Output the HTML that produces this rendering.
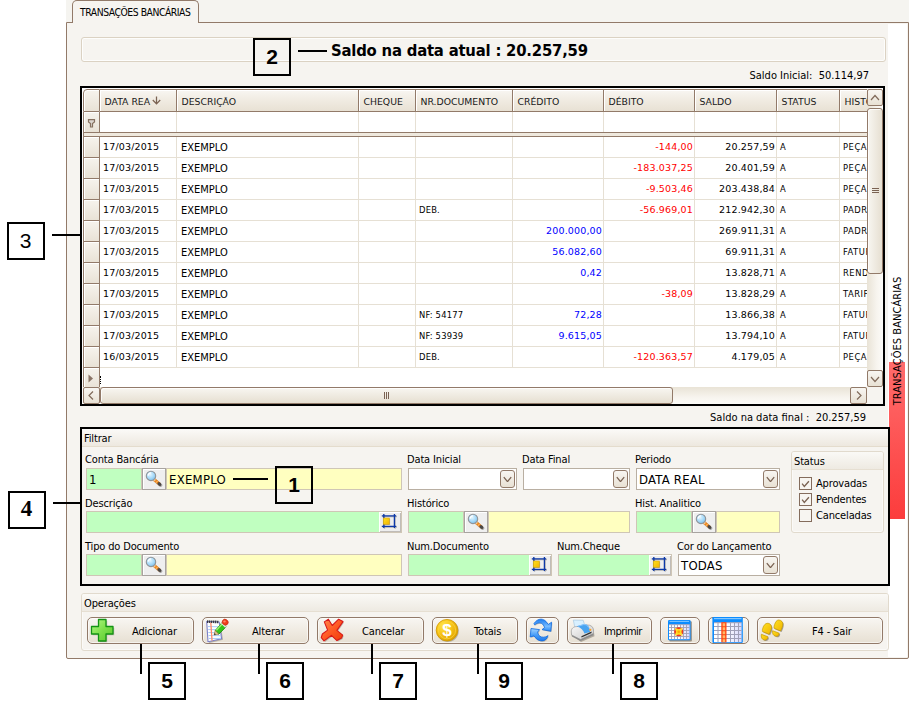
<!DOCTYPE html>
<html lang="pt-BR"><head><meta charset="utf-8"><title>Transações Bancárias</title>
<style>
html,body{margin:0;padding:0}
body{width:909px;height:704px;position:relative;overflow:hidden;background:#fff;
 font-family:"DejaVu Sans Condensed","Liberation Sans",sans-serif;font-size:11px;color:#000;line-height:13px}
div,span{position:absolute;box-sizing:border-box;white-space:nowrap}
.arial{font-family:"Liberation Sans",sans-serif}
.panel{left:66px;top:22px;width:843px;height:637px;background:#f6f4f0;border:1px solid #927a69;border-radius:0 0 2px 2px}
.topstrip{left:66px;top:0;width:843px;height:22px;background:#f5f4f0}
.tab{left:72px;top:0;width:127px;height:23px;background:#f6f4f0;border:1px solid #927a69;border-bottom:none;border-radius:5px 5px 0 0}
.tab span{left:7px;top:5px;font-size:10.3px;letter-spacing:-0.45px}
.wstrip{left:888px;top:24px;width:19px;height:633px;background:#fff}
.rstrip{left:889px;top:362px;width:16px;height:157px;background:linear-gradient(#ff6c6c,#fc3c3c)}
.vtext{left:897px;top:341px;width:0;height:0}
.vtext span{transform:translate(-50%,-50%) rotate(-90deg);left:0;top:0;font-size:11px;letter-spacing:0.05px}
.topbar{left:81px;top:37px;width:805px;height:25px;border:1px solid #dbd2c3;border-radius:3px;background:#f6f4f0;box-shadow:inset 0 0 0 1px #fdfdfc}
.title{left:331px;top:41px;font-weight:bold;font-size:16.5px;line-height:20px;letter-spacing:-0.2px}
.callout{border:2px solid #000;width:38px;height:38px;text-align:center;font-family:"Liberation Sans",sans-serif;font-weight:bold;font-size:21px;line-height:34px}
.ln{background:#000}
.lbl{font-size:11px;line-height:13px;letter-spacing:-0.15px}
.grid{left:80px;top:86px;width:805px;height:320px;border:2px solid #000;background:#fff;overflow:hidden}
.hdr{top:1px;height:23px;border-top:1px solid #927a69;border-bottom:1px solid #927a69;border-right:1px solid #927a69;background:linear-gradient(#f8f6f2,#f1ece3 45%,#e8e1d4);box-shadow:inset 1px 1px 0 #fff}
.hdr span{left:4.5px;top:5px;font-family:"DejaVu Sans","Liberation Sans",sans-serif;font-size:9.3px;color:#1a1a1a;letter-spacing:0}
.ind{left:1px;width:17px;border-left:1px solid #927a69;border-right:1px solid #927a69;border-bottom:1px solid #927a69;background:linear-gradient(#f6f3ed,#e9e2d6);box-shadow:inset 1px 1px 0 #fff}
.vl{width:1px;background:#e6e0d4}
.hl{height:1px;background:#e6e0d4;left:18px;width:768px}
.cell{height:20px;line-height:22px;font-size:11px;overflow:hidden}
.r{text-align:right}
.tx{font-size:9.3px;line-height:20px;letter-spacing:.2px}
.n{font-family:"DejaVu Sans","Liberation Sans",sans-serif;font-size:9.5px;line-height:20px;letter-spacing:.15px}
.red{color:#f00}.blue{color:#00f}
.inp{height:22px;border:1px solid #cfc6b6;line-height:22px;font-size:13px;letter-spacing:.25px;padding-left:2px}
.g{background:#c0ffc0}.y{background:#ffffc0}.w{background:#fff}
.sbtn{width:24px;height:22px;border:1px solid #a8a4a0;background:#efefef;box-shadow:inset 1px 1px 0 #fff}
.dd{width:15px;height:18px;border:1px solid #927a69;border-radius:3px;background:linear-gradient(#f8f6f2,#e8e1d4)}
.grp{border:1px solid #e1dacd;border-radius:3px;background:#f6f4f0;box-shadow:inset 0 0 0 1px #fbfaf8}
.grph{left:0;top:0;right:0;height:17px;background:linear-gradient(#faf9f6,#eeeae2);border-bottom:1px solid #e6dfd2;border-radius:2px 2px 0 0}
.btn{top:617px;height:27px;border:1px solid #927a69;border-radius:5px;background:linear-gradient(#f8f6f2,#f0ebe2 50%,#e7e0d3);box-shadow:inset 0 0 0 1px rgba(255,255,255,.6)}
.btn span.t{top:7px;font-size:11px;letter-spacing:-0.15px}
.chk{width:13px;height:13px;border:1px solid #846c5c;background:#f7f5f1}
</style></head>
<body>
<div class="topstrip"></div>
<div class="panel"></div>
<div class="tab"><span>TRANSAÇÕES BANCÁRIAS</span></div>
<div class="wstrip"></div><div class="rstrip"></div>
<div class="vtext"><span>TRANSAÇÕES BANCÁRIAS</span></div>
<div class="topbar"></div>
<div class="title">Saldo na data atual : 20.257,59</div>
<div class="lbl" style="right:40px;top:69px;letter-spacing:0">Saldo Inicial:&nbsp; 50.114,97</div>
<div class="grid"><div class="ind" style="top:1px;height:23px;border-top:1px solid #927a69;border-radius:4px 0 0 0"></div><div class="hdr" style="left:18px;width:77px"><span>DATA REA</span><svg style="position:absolute;left:52px;top:6px" width="9" height="9" viewBox="0 0 9 9"><path d="M4.500 0.400V7.800M0.800 4L4.500 7.900L8.200 4" fill="none" stroke="#7a6252" stroke-width="1.250"/></svg></div><div class="hdr" style="left:95px;width:182px"><span>DESCRIÇÃO</span></div><div class="hdr" style="left:277px;width:57px"><span>CHEQUE</span></div><div class="hdr" style="left:334px;width:97px"><span>NR.DOCUMENTO</span></div><div class="hdr" style="left:431px;width:91px"><span>CRÉDITO</span></div><div class="hdr" style="left:522px;width:91px"><span>DÉBITO</span></div><div class="hdr" style="left:613px;width:82px"><span>SALDO</span></div><div class="hdr" style="left:695px;width:63px"><span>STATUS</span></div><div class="hdr" style="left:758px;width:61px"><span>HISTÓRICO</span></div><div class="ind" style="top:24px;height:21px"><svg style="position:absolute;left:3px;top:7px" width="9" height="9" viewBox="0 0 9 9"><path d="M1.500 0.600H7.500V3L5.500 4.600V8H3.500V4.600L1.500 3Z" fill="#dcd6d0" stroke="#86705f" stroke-width="1.200"/></svg></div><div style="left:1px;top:44px;width:785px;height:5px;background:#efe9de;border-top:1px solid #927a69;border-bottom:1px solid #927a69;border-left:1px solid #927a69"></div><div class="vl" style="left:94px;top:24px;height:20px"></div><div class="vl" style="left:94px;top:49px;height:231px"></div><div class="vl" style="left:276px;top:24px;height:20px"></div><div class="vl" style="left:276px;top:49px;height:231px"></div><div class="vl" style="left:333px;top:24px;height:20px"></div><div class="vl" style="left:333px;top:49px;height:231px"></div><div class="vl" style="left:430px;top:24px;height:20px"></div><div class="vl" style="left:430px;top:49px;height:231px"></div><div class="vl" style="left:521px;top:24px;height:20px"></div><div class="vl" style="left:521px;top:49px;height:231px"></div><div class="vl" style="left:612px;top:24px;height:20px"></div><div class="vl" style="left:612px;top:49px;height:231px"></div><div class="vl" style="left:694px;top:24px;height:20px"></div><div class="vl" style="left:694px;top:49px;height:231px"></div><div class="vl" style="left:757px;top:24px;height:20px"></div><div class="vl" style="left:757px;top:49px;height:231px"></div><div class="ind" style="top:49px;height:21px"></div><div class="hl" style="top:69px"></div><div class="cell n" style="left:18px;top:49px;width:76px;padding-left:3px;">17/03/2015</div><div class="cell" style="left:95px;top:49px;width:181px;padding-left:4px;">EXEMPLO</div><div class="cell r n red" style="left:522px;top:49px;width:90px;padding-right:1px;">-144,00</div><div class="cell r n" style="left:613px;top:49px;width:81px;padding-right:1px;">20.257,59</div><div class="cell tx" style="left:695px;top:49px;width:62px;padding-left:3px;">A</div><div class="cell tx" style="left:758px;top:49px;width:60px;padding-left:3px;letter-spacing:.55px;">PEÇAS</div><div class="ind" style="top:70px;height:21px"></div><div class="hl" style="top:90px"></div><div class="cell n" style="left:18px;top:70px;width:76px;padding-left:3px;">17/03/2015</div><div class="cell" style="left:95px;top:70px;width:181px;padding-left:4px;">EXEMPLO</div><div class="cell r n red" style="left:522px;top:70px;width:90px;padding-right:1px;">-183.037,25</div><div class="cell r n" style="left:613px;top:70px;width:81px;padding-right:1px;">20.401,59</div><div class="cell tx" style="left:695px;top:70px;width:62px;padding-left:3px;">A</div><div class="cell tx" style="left:758px;top:70px;width:60px;padding-left:3px;letter-spacing:.55px;">PEÇAS</div><div class="ind" style="top:91px;height:21px"></div><div class="hl" style="top:111px"></div><div class="cell n" style="left:18px;top:91px;width:76px;padding-left:3px;">17/03/2015</div><div class="cell" style="left:95px;top:91px;width:181px;padding-left:4px;">EXEMPLO</div><div class="cell r n red" style="left:522px;top:91px;width:90px;padding-right:1px;">-9.503,46</div><div class="cell r n" style="left:613px;top:91px;width:81px;padding-right:1px;">203.438,84</div><div class="cell tx" style="left:695px;top:91px;width:62px;padding-left:3px;">A</div><div class="cell tx" style="left:758px;top:91px;width:60px;padding-left:3px;letter-spacing:.55px;">PEÇAS</div><div class="ind" style="top:112px;height:21px"></div><div class="hl" style="top:132px"></div><div class="cell n" style="left:18px;top:112px;width:76px;padding-left:3px;">17/03/2015</div><div class="cell" style="left:95px;top:112px;width:181px;padding-left:4px;">EXEMPLO</div><div class="cell tx" style="left:334px;top:112px;width:96px;padding-left:3px;">DEB.</div><div class="cell r n red" style="left:522px;top:112px;width:90px;padding-right:1px;">-56.969,01</div><div class="cell r n" style="left:613px;top:112px;width:81px;padding-right:1px;">212.942,30</div><div class="cell tx" style="left:695px;top:112px;width:62px;padding-left:3px;">A</div><div class="cell tx" style="left:758px;top:112px;width:60px;padding-left:3px;letter-spacing:.55px;">PADRÃO</div><div class="ind" style="top:133px;height:21px"></div><div class="hl" style="top:153px"></div><div class="cell n" style="left:18px;top:133px;width:76px;padding-left:3px;">17/03/2015</div><div class="cell" style="left:95px;top:133px;width:181px;padding-left:4px;">EXEMPLO</div><div class="cell r n blue" style="left:431px;top:133px;width:90px;padding-right:1px;">200.000,00</div><div class="cell r n" style="left:613px;top:133px;width:81px;padding-right:1px;">269.911,31</div><div class="cell tx" style="left:695px;top:133px;width:62px;padding-left:3px;">A</div><div class="cell tx" style="left:758px;top:133px;width:60px;padding-left:3px;letter-spacing:.55px;">PADRÃO</div><div class="ind" style="top:154px;height:21px"></div><div class="hl" style="top:174px"></div><div class="cell n" style="left:18px;top:154px;width:76px;padding-left:3px;">17/03/2015</div><div class="cell" style="left:95px;top:154px;width:181px;padding-left:4px;">EXEMPLO</div><div class="cell r n blue" style="left:431px;top:154px;width:90px;padding-right:1px;">56.082,60</div><div class="cell r n" style="left:613px;top:154px;width:81px;padding-right:1px;">69.911,31</div><div class="cell tx" style="left:695px;top:154px;width:62px;padding-left:3px;">A</div><div class="cell tx" style="left:758px;top:154px;width:60px;padding-left:3px;letter-spacing:.55px;">FATURA</div><div class="ind" style="top:175px;height:21px"></div><div class="hl" style="top:195px"></div><div class="cell n" style="left:18px;top:175px;width:76px;padding-left:3px;">17/03/2015</div><div class="cell" style="left:95px;top:175px;width:181px;padding-left:4px;">EXEMPLO</div><div class="cell r n blue" style="left:431px;top:175px;width:90px;padding-right:1px;">0,42</div><div class="cell r n" style="left:613px;top:175px;width:81px;padding-right:1px;">13.828,71</div><div class="cell tx" style="left:695px;top:175px;width:62px;padding-left:3px;">A</div><div class="cell tx" style="left:758px;top:175px;width:60px;padding-left:3px;letter-spacing:.55px;">RENDIMENTO</div><div class="ind" style="top:196px;height:21px"></div><div class="hl" style="top:216px"></div><div class="cell n" style="left:18px;top:196px;width:76px;padding-left:3px;">17/03/2015</div><div class="cell" style="left:95px;top:196px;width:181px;padding-left:4px;">EXEMPLO</div><div class="cell r n red" style="left:522px;top:196px;width:90px;padding-right:1px;">-38,09</div><div class="cell r n" style="left:613px;top:196px;width:81px;padding-right:1px;">13.828,29</div><div class="cell tx" style="left:695px;top:196px;width:62px;padding-left:3px;">A</div><div class="cell tx" style="left:758px;top:196px;width:60px;padding-left:3px;letter-spacing:.55px;">TARIFA</div><div class="ind" style="top:217px;height:21px"></div><div class="hl" style="top:237px"></div><div class="cell n" style="left:18px;top:217px;width:76px;padding-left:3px;">17/03/2015</div><div class="cell" style="left:95px;top:217px;width:181px;padding-left:4px;">EXEMPLO</div><div class="cell tx" style="left:334px;top:217px;width:96px;padding-left:3px;">NF: 54177</div><div class="cell r n blue" style="left:431px;top:217px;width:90px;padding-right:1px;">72,28</div><div class="cell r n" style="left:613px;top:217px;width:81px;padding-right:1px;">13.866,38</div><div class="cell tx" style="left:695px;top:217px;width:62px;padding-left:3px;">A</div><div class="cell tx" style="left:758px;top:217px;width:60px;padding-left:3px;letter-spacing:.55px;">FATURA</div><div class="ind" style="top:238px;height:21px"></div><div class="hl" style="top:258px"></div><div class="cell n" style="left:18px;top:238px;width:76px;padding-left:3px;">17/03/2015</div><div class="cell" style="left:95px;top:238px;width:181px;padding-left:4px;">EXEMPLO</div><div class="cell tx" style="left:334px;top:238px;width:96px;padding-left:3px;">NF: 53939</div><div class="cell r n blue" style="left:431px;top:238px;width:90px;padding-right:1px;">9.615,05</div><div class="cell r n" style="left:613px;top:238px;width:81px;padding-right:1px;">13.794,10</div><div class="cell tx" style="left:695px;top:238px;width:62px;padding-left:3px;">A</div><div class="cell tx" style="left:758px;top:238px;width:60px;padding-left:3px;letter-spacing:.55px;">FATURA</div><div class="ind" style="top:259px;height:21px"></div><div class="hl" style="top:279px"></div><div class="cell n" style="left:18px;top:259px;width:76px;padding-left:3px;">16/03/2015</div><div class="cell" style="left:95px;top:259px;width:181px;padding-left:4px;">EXEMPLO</div><div class="cell tx" style="left:334px;top:259px;width:96px;padding-left:3px;">DEB.</div><div class="cell r n red" style="left:522px;top:259px;width:90px;padding-right:1px;">-120.363,57</div><div class="cell r n" style="left:613px;top:259px;width:81px;padding-right:1px;">4.179,05</div><div class="cell tx" style="left:695px;top:259px;width:62px;padding-left:3px;">A</div><div class="cell tx" style="left:758px;top:259px;width:60px;padding-left:3px;letter-spacing:.55px;">PEÇAS</div><div class="ind" style="top:280px;height:20px;border-bottom:none"><svg style="position:absolute;left:4px;top:6px" width="6" height="9" viewBox="0 0 6 9"><path d="M0.5 0.5L5 4.5L0.5 8.5Z" fill="#8a7466"/></svg></div><div style="left:18px;top:288px;width:1px;height:8px;border-left:1px dotted #000"></div><div style="left:1px;top:299px;width:785px;height:17px;background:linear-gradient(#e9e3d6,#f7f4ee 60%,#fcfbf8)"></div><div style="left:1px;top:299px;width:17px;height:17px;border:1px solid #927a69;border-radius:2px;background:linear-gradient(#f8f6f2,#e8e1d4)"><svg style="position:absolute;left:3px;top:3px" width="8" height="9" viewBox="0 0 8 9"><path d="M6 0.5L2 4.5L6 8.5" fill="none" stroke="#806a5a" stroke-width="1.2"/></svg></div><div style="left:18px;top:299px;width:573px;height:17px;border:1px solid #927a69;border-radius:3px;background:linear-gradient(#f8f6f1,#e6dfd1);box-shadow:inset 1px 1px 0 rgba(255,255,255,.8)"><svg style="position:absolute;left:283px;top:4px" width="6" height="7" viewBox="0 0 6 7"><path d="M.5 0V7M2.500 0V7M4.500 0V7" stroke="#7a6252" stroke-width="1"/></svg></div><div style="left:768px;top:299px;width:17px;height:17px;border:1px solid #927a69;border-radius:2px;background:linear-gradient(#f8f6f2,#e8e1d4)"><svg style="position:absolute;left:4px;top:3px" width="8" height="9" viewBox="0 0 8 9"><path d="M2 0.5L6 4.5L2 8.5" fill="none" stroke="#806a5a" stroke-width="1.2"/></svg></div><div style="left:785px;top:1px;width:16px;height:315px;background:#f6f4f0"></div><div style="left:785px;top:1px;width:16px;height:298px;background:linear-gradient(90deg,#e9e3d6,#f7f4ee 60%,#fcfbf8)"></div><div style="left:785px;top:1px;width:16px;height:17px;border:1px solid #927a69;border-radius:2px;background:linear-gradient(#f8f6f2,#e8e1d4)"><svg style="position:absolute;left:2px;top:4px" width="10" height="7" viewBox="0 0 10 7"><path d="M1 6L5 1.5L9 6" fill="none" stroke="#806a5a" stroke-width="1.2"/></svg></div><div style="left:785px;top:20px;width:16px;height:166px;border:1px solid #927a69;border-radius:3px;background:linear-gradient(90deg,#f8f6f1,#e6dfd1);box-shadow:inset 1px 1px 0 rgba(255,255,255,.8)"><svg style="position:absolute;left:4px;top:79px" width="7" height="6" viewBox="0 0 7 6"><path d="M0 .5H7M0 2.500H7M0 4.500H7" stroke="#7a6252" stroke-width="1"/></svg></div><div style="left:785px;top:282px;width:16px;height:17px;border:1px solid #927a69;border-radius:2px;background:linear-gradient(#f8f6f2,#e8e1d4)"><svg style="position:absolute;left:2px;top:5px" width="10" height="7" viewBox="0 0 10 7"><path d="M1 1L5 5.5L9 1" fill="none" stroke="#806a5a" stroke-width="1.2"/></svg></div></div>
<div class="lbl" style="right:43px;top:411px;letter-spacing:0">Saldo na data final :&nbsp; 20.257,59</div>
<div style="left:80px;top:427px;width:810px;height:159px;border:2px solid #000;background:#f6f4f0"></div>
<div style="left:82px;top:429px;width:806px;height:18px;background:linear-gradient(#fbfaf8,#ede8df);border-bottom:1px solid #e4dccd"></div>
<div class="lbl" style="left:84px;top:432px">Filtrar</div>
<div class="lbl" style="left:85px;top:453px">Conta Bancária</div>
<div class="inp g" style="left:86px;top:468px;width:56px">1</div>
<div class="sbtn" style="left:142px;top:468px"><svg style="position:absolute;left:0px;top:0px" width="22" height="20" viewBox="0 0 22 20"><path d="M11.300 10.700L17 15.600" stroke="#505050" stroke-width="3.400" stroke-linecap="round" opacity=".45" transform="translate(.6,.6)"/><path d="M11 10.400L16.600 15.200" stroke="#f08418" stroke-width="3" stroke-linecap="round"/><path d="M12.600 10.600L11.200 12.300M14.400 12.100L13 13.800" stroke="#ffd898" stroke-width=".9"/><path d="M16 14.700L16.800 15.400" stroke="#484848" stroke-width="3" stroke-linecap="round"/><path d="M10.500 9.800L11.800 10.900" stroke="#f0f0f0" stroke-width="2.200"/><circle cx="8" cy="6.900" r="4.700" fill="url(#gL)" stroke="#909498" stroke-width="1.100"/><path d="M5.200 6.200A3 3 0 0 1 7.600 3.800" stroke="#fff" stroke-width="1.300" fill="none" stroke-linecap="round"/></svg></div>
<div class="inp y" style="left:166px;top:468px;width:236px">EXEMPLO</div>
<div class="lbl" style="left:407px;top:453px">Data Inicial</div>
<div class="inp w" style="left:408px;top:468px;width:109px;border-color:#b9afa2"><div class="dd" style="right:1px;top:1px"><svg style="position:absolute;left:2px;top:5px" width="9" height="6" viewBox="0 0 9 6"><path d="M0.8 1.200L4.500 5.600L8.200 1.200" fill="none" stroke="#7a6252" stroke-width="1.300"/></svg></div></div>
<div class="lbl" style="left:522px;top:453px">Data Final</div>
<div class="inp w" style="left:523px;top:468px;width:107px;border-color:#b9afa2"><div class="dd" style="right:1px;top:1px"><svg style="position:absolute;left:2px;top:5px" width="9" height="6" viewBox="0 0 9 6"><path d="M0.8 1.200L4.500 5.600L8.200 1.200" fill="none" stroke="#7a6252" stroke-width="1.300"/></svg></div></div>
<div class="lbl" style="left:635px;top:453px">Periodo</div>
<div class="inp w" style="left:636px;top:468px;width:144px;border-color:#b9afa2">DATA REAL<div class="dd" style="right:1px;top:1px"><svg style="position:absolute;left:2px;top:5px" width="9" height="6" viewBox="0 0 9 6"><path d="M0.8 1.200L4.500 5.600L8.200 1.200" fill="none" stroke="#7a6252" stroke-width="1.300"/></svg></div></div>
<div class="lbl" style="left:85px;top:497px">Descrição</div>
<div class="inp g" style="left:86px;top:511px;width:316px"></div>
<div style="left:379px;top:512px;width:22px;height:20px;background:#eeeeee;box-shadow:inset 1px 1px 0 #fff,inset -1px -1px 0 #c0bcb8"><svg style="position:absolute;left:0px;top:0px" width="22" height="20" viewBox="0 0 22 20"><g transform="translate(.7,.7)" opacity=".35"><path d="M2.800 3.900H17.200M2.800 14.300H17.200M4.800 2V16M15.400 2V16" stroke="#404040" stroke-width="1.300" fill="none"/><rect x="4.200" y="6" width="6.200" height="6.300" fill="#404040"/></g><path d="M2.800 3.900H17.200M2.800 14.300H17.200M4.800 2V16M15.400 2V16" stroke="#0c38a8" stroke-width="1.300" fill="none"/><rect x="4.200" y="6" width="6.200" height="6.300" fill="url(#gY)" stroke="#d8a000" stroke-width=".5"/></svg></div>
<div class="lbl" style="left:407px;top:497px">Histórico</div>
<div class="inp g" style="left:408px;top:511px;width:56px"></div>
<div class="sbtn" style="left:464px;top:511px"><svg style="position:absolute;left:0px;top:0px" width="22" height="20" viewBox="0 0 22 20"><path d="M11.300 10.700L17 15.600" stroke="#505050" stroke-width="3.400" stroke-linecap="round" opacity=".45" transform="translate(.6,.6)"/><path d="M11 10.400L16.600 15.200" stroke="#f08418" stroke-width="3" stroke-linecap="round"/><path d="M12.600 10.600L11.200 12.300M14.400 12.100L13 13.800" stroke="#ffd898" stroke-width=".9"/><path d="M16 14.700L16.800 15.400" stroke="#484848" stroke-width="3" stroke-linecap="round"/><path d="M10.500 9.800L11.800 10.900" stroke="#f0f0f0" stroke-width="2.200"/><circle cx="8" cy="6.900" r="4.700" fill="url(#gL)" stroke="#909498" stroke-width="1.100"/><path d="M5.200 6.200A3 3 0 0 1 7.600 3.800" stroke="#fff" stroke-width="1.300" fill="none" stroke-linecap="round"/></svg></div>
<div class="inp y" style="left:488px;top:511px;width:142px"></div>
<div class="lbl" style="left:635px;top:497px">Hist. Analitico</div>
<div class="inp g" style="left:636px;top:511px;width:56px"></div>
<div class="sbtn" style="left:692px;top:511px"><svg style="position:absolute;left:0px;top:0px" width="22" height="20" viewBox="0 0 22 20"><path d="M11.300 10.700L17 15.600" stroke="#505050" stroke-width="3.400" stroke-linecap="round" opacity=".45" transform="translate(.6,.6)"/><path d="M11 10.400L16.600 15.200" stroke="#f08418" stroke-width="3" stroke-linecap="round"/><path d="M12.600 10.600L11.200 12.300M14.400 12.100L13 13.800" stroke="#ffd898" stroke-width=".9"/><path d="M16 14.700L16.800 15.400" stroke="#484848" stroke-width="3" stroke-linecap="round"/><path d="M10.500 9.800L11.800 10.900" stroke="#f0f0f0" stroke-width="2.200"/><circle cx="8" cy="6.900" r="4.700" fill="url(#gL)" stroke="#909498" stroke-width="1.100"/><path d="M5.200 6.200A3 3 0 0 1 7.600 3.800" stroke="#fff" stroke-width="1.300" fill="none" stroke-linecap="round"/></svg></div>
<div class="inp y" style="left:716px;top:511px;width:64px"></div>
<div class="lbl" style="left:85px;top:540px">Tipo do Documento</div>
<div class="inp g" style="left:86px;top:554px;width:56px"></div>
<div class="sbtn" style="left:142px;top:554px"><svg style="position:absolute;left:0px;top:0px" width="22" height="20" viewBox="0 0 22 20"><path d="M11.300 10.700L17 15.600" stroke="#505050" stroke-width="3.400" stroke-linecap="round" opacity=".45" transform="translate(.6,.6)"/><path d="M11 10.400L16.600 15.200" stroke="#f08418" stroke-width="3" stroke-linecap="round"/><path d="M12.600 10.600L11.200 12.300M14.400 12.100L13 13.800" stroke="#ffd898" stroke-width=".9"/><path d="M16 14.700L16.800 15.400" stroke="#484848" stroke-width="3" stroke-linecap="round"/><path d="M10.500 9.800L11.800 10.900" stroke="#f0f0f0" stroke-width="2.200"/><circle cx="8" cy="6.900" r="4.700" fill="url(#gL)" stroke="#909498" stroke-width="1.100"/><path d="M5.200 6.200A3 3 0 0 1 7.600 3.800" stroke="#fff" stroke-width="1.300" fill="none" stroke-linecap="round"/></svg></div>
<div class="inp y" style="left:166px;top:554px;width:236px"></div>
<div class="lbl" style="left:407px;top:540px">Num.Documento</div>
<div class="inp g" style="left:408px;top:554px;width:144px"></div>
<div style="left:529px;top:555px;width:22px;height:20px;background:#eeeeee;box-shadow:inset 1px 1px 0 #fff,inset -1px -1px 0 #c0bcb8"><svg style="position:absolute;left:0px;top:0px" width="22" height="20" viewBox="0 0 22 20"><g transform="translate(.7,.7)" opacity=".35"><path d="M2.800 3.900H17.200M2.800 14.300H17.200M4.800 2V16M15.400 2V16" stroke="#404040" stroke-width="1.300" fill="none"/><rect x="4.200" y="6" width="6.200" height="6.300" fill="#404040"/></g><path d="M2.800 3.900H17.200M2.800 14.300H17.200M4.800 2V16M15.400 2V16" stroke="#0c38a8" stroke-width="1.300" fill="none"/><rect x="4.200" y="6" width="6.200" height="6.300" fill="url(#gY)" stroke="#d8a000" stroke-width=".5"/></svg></div>
<div class="lbl" style="left:557px;top:540px">Num.Cheque</div>
<div class="inp g" style="left:558px;top:554px;width:114px"></div>
<div style="left:649px;top:555px;width:22px;height:20px;background:#eeeeee;box-shadow:inset 1px 1px 0 #fff,inset -1px -1px 0 #c0bcb8"><svg style="position:absolute;left:0px;top:0px" width="22" height="20" viewBox="0 0 22 20"><g transform="translate(.7,.7)" opacity=".35"><path d="M2.800 3.900H17.200M2.800 14.300H17.200M4.800 2V16M15.400 2V16" stroke="#404040" stroke-width="1.300" fill="none"/><rect x="4.200" y="6" width="6.200" height="6.300" fill="#404040"/></g><path d="M2.800 3.900H17.200M2.800 14.300H17.200M4.800 2V16M15.400 2V16" stroke="#0c38a8" stroke-width="1.300" fill="none"/><rect x="4.200" y="6" width="6.200" height="6.300" fill="url(#gY)" stroke="#d8a000" stroke-width=".5"/></svg></div>
<div class="lbl" style="left:677px;top:540px">Cor do Lançamento</div>
<div class="inp w" style="left:678px;top:554px;width:102px;border-color:#b9afa2">TODAS<div class="dd" style="right:1px;top:1px"><svg style="position:absolute;left:2px;top:5px" width="9" height="6" viewBox="0 0 9 6"><path d="M0.8 1.200L4.500 5.600L8.200 1.200" fill="none" stroke="#7a6252" stroke-width="1.300"/></svg></div></div>
<div class="grp" style="left:791px;top:451px;width:93px;height:82px"><div class="grph" style="height:18px"></div><div class="lbl" style="left:2px;top:3px">Status</div></div>
<div class="chk" style="left:799px;top:477px"><svg style="position:absolute;left:1px;top:1px" width="9" height="9" viewBox="0 0 9 9"><path d="M1.100 4.700L3.300 7.500L7.900 2.200" fill="none" stroke="#7a6252" stroke-width="1.300"/></svg></div>
<div class="lbl" style="left:816px;top:477px">Aprovadas</div>
<div class="chk" style="left:799px;top:493px"><svg style="position:absolute;left:1px;top:1px" width="9" height="9" viewBox="0 0 9 9"><path d="M1.100 4.700L3.300 7.500L7.900 2.200" fill="none" stroke="#7a6252" stroke-width="1.300"/></svg></div>
<div class="lbl" style="left:816px;top:493px">Pendentes</div>
<div class="chk" style="left:799px;top:509px"></div>
<div class="lbl" style="left:816px;top:509px">Canceladas</div>
<div class="grp" style="left:81px;top:593px;width:808px;height:58px"><div class="grph" style="height:18px"></div><div class="lbl" style="left:2px;top:3px">Operações</div></div>
<svg width="0" height="0" style="position:absolute"><defs><linearGradient id="gG" x1="0" y1="0" x2="1" y2="1"><stop offset="0" stop-color="#b4f888"/><stop offset=".5" stop-color="#7ee04c"/><stop offset="1" stop-color="#58c42c"/></linearGradient><linearGradient id="gR" x1="0" y1="0" x2="1" y2="1"><stop offset="0" stop-color="#ff8a50"/><stop offset=".5" stop-color="#ff5a24"/><stop offset="1" stop-color="#ee3a0c"/></linearGradient><radialGradient id="gC" cx=".35" cy=".3" r=".8"><stop offset="0" stop-color="#ffe850"/><stop offset=".45" stop-color="#f8c418"/><stop offset="1" stop-color="#d89c00"/></radialGradient><linearGradient id="gB" x1="0" y1="0" x2="0" y2="1"><stop offset="0" stop-color="#1c7cf0"/><stop offset=".6" stop-color="#78bcff"/><stop offset="1" stop-color="#2a88f4"/></linearGradient><linearGradient id="gB2" x1="0" y1="0" x2="0" y2="1"><stop offset="0" stop-color="#a4d4ff"/><stop offset=".5" stop-color="#4ca0f8"/><stop offset="1" stop-color="#1c78ec"/></linearGradient><radialGradient id="gL" cx=".4" cy=".35" r=".7"><stop offset="0" stop-color="#e4f6ff"/><stop offset=".6" stop-color="#a4d8f8"/><stop offset="1" stop-color="#78bce8"/></radialGradient><linearGradient id="gY" x1="0" y1="0" x2="1" y2="1"><stop offset="0" stop-color="#ffe020"/><stop offset="1" stop-color="#f0b400"/></linearGradient><linearGradient id="gP" x1="0" y1="0" x2="1" y2="1"><stop offset="0" stop-color="#fafafa"/><stop offset="1" stop-color="#c8c8c8"/></linearGradient><linearGradient id="gGr" x1="0" y1="0" x2="1" y2="0"><stop offset="0" stop-color="#fff"/><stop offset=".45" stop-color="#fff"/><stop offset="1" stop-color="#d8d8fc"/></linearGradient><linearGradient id="gO" x1="0" y1="0" x2="1" y2="0"><stop offset="0" stop-color="#ff3c10"/><stop offset=".5" stop-color="#ffb060"/><stop offset="1" stop-color="#ff3c10"/></linearGradient></defs></svg>
<div class="btn" style="left:87px;width:107px"><svg style="position:absolute;left:2px;top:0px" width="26" height="26" viewBox="0 0 26 26"><path d="M8.500 1.500h7.500v7h7v7.500h-7v7h-7.500v-7h-7v-7.500h7z" transform="translate(1.200,1.200)" fill="#5a5040" opacity=".35"/><path d="M8.500 1.500h7.500v7h7v7.500h-7v7h-7.500v-7h-7v-7.500h7z" fill="url(#gG)" stroke="#149414" stroke-width="1.300" stroke-linejoin="round"/></svg><span class="t" style="left:44px">Adicionar</span></div>
<div class="btn" style="left:202px;width:107px"><svg style="position:absolute;left:1px;top:0px" width="28" height="26" viewBox="0 0 28 26"><path d="M3 4.500L15.500 4.500L18 21L4 24.500Z" transform="translate(1,.8)" fill="#5a5040" opacity=".35"/><path d="M2.700 3.500L15.200 4L17.600 20.800L4 23.800Z" fill="#fff" stroke="#7c80c8" stroke-width="1.100" stroke-linejoin="round"/><path d="M4 8.500L15.500 8.800M4.200 11.500L16 11.800M4.400 14.500L16.400 14.800M4.600 17.500L16.800 17.700M4.800 20.500L17 20.400" stroke="#a8ccf8" stroke-width="1"/><path d="M6.800 4.500L8 22.500" stroke="#ff8a6a" stroke-width="1.300"/><path d="M3.200 3.600L15 4" stroke="#202020" stroke-width="2.600" stroke-dasharray="1.100 .9"/><path d="M11.200 12.600L18 4.800L22 8.800L14.800 16.200Z" fill="#34c418" stroke="#1a8c0c" stroke-width=".9" stroke-linejoin="round"/><path d="M12.400 12.300L18.300 5.700" stroke="#98f070" stroke-width="1.500"/><path d="M10 17L11.200 12.600L14.800 16.200Z" fill="#e8c890" stroke="#8a6a3a" stroke-width=".6"/><path d="M10 17L10.600 14.900L12 16.400Z" fill="#303030"/><path d="M17.600 5.100L21.700 9.100" stroke="#e4e4e4" stroke-width="1.500"/><ellipse cx="21.200" cy="4.200" rx="3.100" ry="2.800" transform="rotate(40 21.200 4.200)" fill="#f03c1c" stroke="#c02408" stroke-width=".6"/><ellipse cx="20.500" cy="3.400" rx="1.300" ry="1" fill="#ff8868"/></svg><span class="t" style="left:49px">Alterar</span></div>
<div class="btn" style="left:317px;width:107px"><svg style="position:absolute;left:0px;top:0px" width="29" height="26" viewBox="0 0 29 26"><path id="xp" d="M6.300 3.900L10.400 1.200L14.250 7.500L20.600 1.200L25 3.600L18.900 12.400L24.700 17.100L23.600 19.900L18.900 22.600L13.400 17.400L6 22.900L3.250 19.600L4.350 16L9.600 12.150Z" transform="translate(1,1)" fill="#5a5040" opacity=".35"/><path d="M6.300 3.900L10.400 1.200L14.250 7.500L20.600 1.200L25 3.600L18.900 12.400L24.700 17.100L23.600 19.900L18.900 22.600L13.400 17.400L6 22.900L3.250 19.600L4.350 16L9.600 12.150Z" fill="url(#gR)" stroke="#d81818" stroke-width="1.100" stroke-linejoin="round"/></svg><span class="t" style="left:44px">Cancelar</span></div>
<div class="btn" style="left:432px;width:86px"><svg style="position:absolute;left:2px;top:0px" width="26" height="26" viewBox="0 0 26 26"><circle cx="12.800" cy="13" r="11" fill="#5a5040" opacity=".35"/><circle cx="12" cy="12.200" r="10.800" fill="url(#gC)" stroke="#d09800" stroke-width=".8"/><circle cx="12" cy="12.200" r="8.600" fill="none" stroke="#ffd83c" stroke-width="1" opacity=".7"/><text x="12" y="18.400" font-family="Liberation Sans,sans-serif" font-weight="bold" font-size="17" fill="#fff" text-anchor="middle">$</text></svg><span class="t" style="left:41px">Totais</span></div>
<div class="btn" style="left:526px;width:33px"><svg style="position:absolute;left:0px;top:0px" width="30" height="26" viewBox="0 0 30 26"><g transform="translate(.8,.8)" fill="#5a5040" opacity=".3"><path d="M7 5.550C9 2.500 11.500 1.150 13.900 1.150C16 1.150 17.800 2.200 18.850 3.350L21.300 6.400L24.600 4.200L23.800 13.250L15 11.600L17.500 9.700C17 7.500 16 6.200 14.500 5.300C12.500 4.300 9.500 5 7.600 6.900Z"/><path d="M4 10.500L12.500 11.600L10.600 14.100C11 16 11.800 17.400 12.800 18.200C14.500 19.600 18.500 19.700 21.050 17.650C20 21 17.500 22.900 15 22.900C12.500 22.900 10.500 21.800 9.500 20.950L7 17.900L3.200 19Z"/></g><path d="M7 5.550C9 2.500 11.500 1.150 13.900 1.150C16 1.150 17.800 2.200 18.850 3.350L21.300 6.400L24.600 4.200L23.800 13.250L15 11.600L17.500 9.700C17 7.500 16 6.200 14.500 5.300C12.500 4.300 9.500 5 7.600 6.900Z" fill="url(#gB)" stroke="#0c68e0" stroke-width=".8" stroke-linejoin="round"/><path d="M4 10.500L12.500 11.600L10.600 14.100C11 16 11.800 17.400 12.800 18.200C14.500 19.600 18.500 19.700 21.050 17.650C20 21 17.500 22.900 15 22.900C12.500 22.900 10.500 21.800 9.500 20.950L7 17.900L3.200 19Z" fill="url(#gB2)" stroke="#0c68e0" stroke-width=".8" stroke-linejoin="round"/></svg></div>
<div class="btn" style="left:567px;width:85px"><svg style="position:absolute;left:0px;top:0px" width="30" height="26" viewBox="0 0 30 26"><path d="M5 17.500L12.500 23.300L26 17.500L25.500 14L5 14Z" transform="translate(.5,.8)" fill="#5a5040" opacity=".4"/><path d="M5.300 2.100L15.200 2.250L16.800 7.500L6.900 9.500Z" fill="#d8f0ff" stroke="#a8c8e0" stroke-width=".7"/><path d="M3.300 14C3 10.500 5.500 8.700 8.500 8.600L19 7C23 6.800 25.300 9 25.500 12L25.500 15.500L12.500 21.500L3.600 17Z" fill="url(#gP)" stroke="#a0a0a0" stroke-width=".8" stroke-linejoin="round"/><path d="M8.800 8.400L15.500 6.300C19 5.800 21 8 21.600 11L22 14L16.500 15.500C15.500 12 13 9.500 8.800 8.400Z" fill="#48a4f0"/><path d="M10 8.200L15.500 6.600C18 6.300 19.800 7.500 20.600 9.500" stroke="#8cc8ff" stroke-width="1" fill="none"/><path d="M3.600 17L12.500 21.500L25.500 15.500L25.400 17.300L12.400 23L3.900 18.500Z" fill="#8c8c8c"/><path d="M13.300 18.200L23.500 13.600L23.600 15L13.600 19.600Z" fill="#303030"/><circle cx="22.300" cy="11.800" r="1.100" fill="#ffa020"/></svg><span class="t" style="left:36px"><i style="font-style:normal;letter-spacing:-0.55px">Imprimir</i></span></div>
<div class="btn" style="left:660px;width:40px"><svg style="position:absolute;left:7px;top:2px" width="25" height="22" viewBox="0 0 25 22"><rect x="1.300" y="1.300" width="22.600" height="20.200" rx="1" fill="#4a4034" opacity=".5"/><rect x="0" y="0" width="22.600" height="20.200" rx="1.200" fill="#0c8cff"/><path d="M1.500 1.400H21" stroke="#84c8ff" stroke-width="1"/><rect x="1" y="4.500" width="20.600" height="14.700" fill="url(#gGr)"/><path d="M3.500 4.500V19.200M6.500 4.500V19.200M9.500 4.500V19.200M12.500 4.500V19.200M15.500 4.500V19.200M18.500 4.500V19.200M1 4.700H21.600M1 7.500H21.600M1 10.500H21.600M1 13.500H21.600M1 16.500H21.600" stroke="#a0a0b8" stroke-width=".9"/><circle cx="10.700" cy="11.800" r="4.500" fill="#f03a1c"/><path d="M6.600 7.700L10.700 9.300L14.800 7.700L13.200 11.800L14.800 15.900L10.700 14.300L6.600 15.900L8.200 11.800Z" fill="#ffe438"/><circle cx="10.700" cy="11.800" r="2.600" fill="#ffd820"/><circle cx="10.700" cy="11.800" r="1.300" fill="#ffa800"/></svg></div>
<div class="btn" style="left:708px;width:41px"><svg style="position:absolute;left:3px;top:-1px" width="32" height="27" viewBox="0 0 32 27"><rect x=".400" y="0" width="30.400" height="26" rx="1.200" fill="#0c8cff"/><path d="M2 1.600H29.500" stroke="#84c8ff" stroke-width="1.200"/><rect x="2" y="5.500" width="27.600" height="19.700" fill="url(#gGr)"/><path d="M2 5.700H29.600M2 9.500H29.600M2 13.500H29.600M2 17.500H29.600M2 21.500H29.600M6 5.500V25.200M18.500 5.500V25.200M22.500 5.500V25.200M26.500 5.500V25.200" stroke="#a0a0b8" stroke-width="1"/><rect x="9.300" y="5.200" width="5.200" height="20.200" fill="#ff4410"/><path d="M11.900 6.200V25" stroke="#ffb868" stroke-width="2.600" stroke-dasharray="3 1"/></svg></div>
<div class="btn" style="left:757px;width:126px"><svg style="position:absolute;left:0px;top:0px" width="30" height="26" viewBox="0 0 30 26"><g transform="translate(1,1)" fill="#4a4034" opacity=".45"><path d="M4.450 13.500C4.300 12 4.400 11.200 4.700 10.500C5.200 8.800 5.800 7.500 6.650 6.650C7.600 5.700 8.800 5.200 9.950 5.300C11.300 5.400 12.400 6.100 13 7.200C13.500 8.100 13.600 9 13.500 9.950C13.200 12 12.300 14.200 11.050 16.300Z"/><path d="M3.350 16.300L9.950 18.750C9.900 19.600 9.600 20.400 9.100 20.950C8.400 21.800 7.500 22.200 6.650 22.050C5 21.800 3.900 20.800 3.600 19.850C3.200 18.700 3.200 17.400 3.350 16.300Z"/><path d="M16 10.200C15.900 9 16.100 7.800 16.550 6.650C17 5.300 17.500 4.200 18.200 3.350C19 2.400 20 1.900 20.950 2C22.200 2.100 23.400 2.700 24 3.600C24.500 4.300 24.800 5 24.800 5.800C24.800 8 23.900 10.500 22.600 13Z"/><path d="M14.600 12.700L21.200 15.200C21.100 16.100 20.900 16.800 20.400 17.400C19.700 18.100 18.800 18.400 17.900 18.200C16.300 17.900 15.200 17 14.900 16C14.500 15 14.400 13.800 14.600 12.700Z"/></g><g fill="url(#gY)" stroke="#c49800" stroke-width=".7" stroke-linejoin="round"><path d="M4.450 13.500C4.300 12 4.400 11.200 4.700 10.500C5.200 8.800 5.800 7.500 6.650 6.650C7.600 5.700 8.800 5.200 9.950 5.300C11.300 5.400 12.400 6.100 13 7.200C13.500 8.100 13.600 9 13.500 9.950C13.200 12 12.300 14.200 11.050 16.300Z"/><path d="M3.350 16.300L9.950 18.750C9.900 19.600 9.600 20.400 9.100 20.950C8.400 21.800 7.500 22.200 6.650 22.050C5 21.800 3.900 20.800 3.600 19.850C3.200 18.700 3.200 17.400 3.350 16.300Z"/><path d="M16 10.200C15.900 9 16.100 7.800 16.550 6.650C17 5.300 17.500 4.200 18.200 3.350C19 2.400 20 1.900 20.950 2C22.200 2.100 23.400 2.700 24 3.600C24.500 4.300 24.800 5 24.800 5.800C24.800 8 23.900 10.500 22.600 13Z"/><path d="M14.600 12.700L21.200 15.200C21.100 16.100 20.900 16.800 20.400 17.400C19.700 18.100 18.800 18.400 17.900 18.200C16.300 17.900 15.200 17 14.900 16C14.500 15 14.400 13.800 14.600 12.700Z"/></g></svg><span class="t" style="left:54px">F4 - Sair</span></div>
<div class="callout" style="left:253px;top:38px;">2</div>
<div class="ln" style="left:298px;top:50px;width:29px;height:2px"></div>
<div class="callout" style="left:7px;top:222px;font-weight:normal;background:#fff;line-height:33px;text-indent:-1px">3</div>
<div class="ln" style="left:52px;top:234px;width:29px;height:2px"></div>
<div class="callout" style="left:8px;top:491px;font-family:'Liberation Serif',serif;font-size:23px;background:#fff;line-height:32px;text-indent:-1px">4</div>
<div class="ln" style="left:53px;top:502px;width:28px;height:2px"></div>
<div class="callout" style="left:275px;top:466px;">1</div>
<div class="ln" style="left:233px;top:478px;width:35px;height:2px"></div>
<div class="ln" style="left:140px;top:644px;width:2px;height:30px"></div>
<div class="callout" style="left:148px;top:662px;background:#fff">5</div>
<div class="ln" style="left:258px;top:644px;width:2px;height:30px"></div>
<div class="callout" style="left:266px;top:662px;background:#fff">6</div>
<div class="ln" style="left:371px;top:644px;width:2px;height:30px"></div>
<div class="callout" style="left:379px;top:662px;background:#fff">7</div>
<div class="ln" style="left:477px;top:644px;width:2px;height:30px"></div>
<div class="callout" style="left:485px;top:662px;background:#fff">9</div>
<div class="ln" style="left:612px;top:644px;width:2px;height:30px"></div>
<div class="callout" style="left:620px;top:662px;background:#fff">8</div>
</body></html>
